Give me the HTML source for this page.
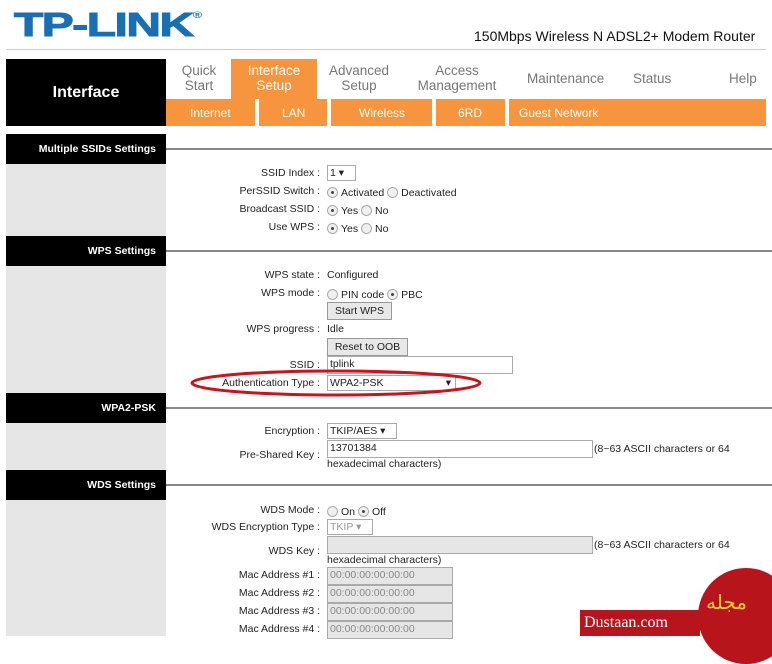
<!DOCTYPE html>
<html><head><meta charset="utf-8"><style>
*{margin:0;padding:0;box-sizing:border-box}
body{width:772px;height:636px;overflow:hidden;background:#fff;font-family:"Liberation Sans",Arial,sans-serif;font-size:10.5px;color:#222;position:relative}
.a{position:absolute}
.lbl{position:absolute;right:452px;text-align:right;white-space:nowrap;line-height:14px}
.v{position:absolute;left:327px;white-space:nowrap;line-height:14px}
.hdr{position:absolute;left:6px;width:160px;height:30px;background:#000;color:#fff;font-weight:bold;font-size:10.5px;text-align:right;padding-right:10px;line-height:30px}
.gray{position:absolute;left:6px;width:160px;background:#e6e6e6}
.hl{position:absolute;left:166px;right:0;height:2px;background:#888}
.nav{position:absolute;top:63px;color:#777;font-size:13.5px;text-align:center;line-height:15px}
.sub{position:absolute;top:106px;color:#fff;font-size:12px}
.sep{position:absolute;top:99px;width:4px;height:27px;background:#fff}
.rad{display:inline-block;width:11px;height:11px;border:1px solid #aaa;border-radius:50%;background:#f0f0f0;vertical-align:-2px;margin-right:3px;position:relative}
.rad.on::after{content:"";position:absolute;left:3px;top:3px;width:3px;height:3px;border-radius:50%;background:#444}
.inp{position:absolute;border:1px solid #aaa;background:#fff;font-size:10.5px;padding-left:2px;line-height:15px}
.btn{position:absolute;border:1px solid #999;background:#e8e8e8;font-size:10.5px;text-align:center;line-height:16px}
.dis{background:#e6e6e6;color:#888}
</style></head><body>
<div class="a" style="left:14px;top:6px;font-size:33px;font-weight:bold;color:#1a6fb3;letter-spacing:-1px;transform:scaleX(1.45);transform-origin:0 0;-webkit-text-stroke:1px #1a6fb3">TP-LINK<span style="font-size:9px;vertical-align:top;position:relative;top:4px;-webkit-text-stroke:0">®</span></div>
<div class="a" style="left:474px;top:28px;font-size:14px;color:#111">150Mbps Wireless N ADSL2+ Modem Router</div>
<div class="a" style="left:6px;top:49px;width:760px;height:1px;background:#ccc"></div>

<div class="a" style="left:6px;top:59px;width:160px;height:67px;background:#000;color:#fff;font-weight:bold;font-size:16px;text-align:center;line-height:67px">Interface</div>
<div class="a" style="left:231px;top:59px;width:86px;height:40px;background:#f7953f"></div>
<div class="a" style="left:166px;top:99px;width:600px;height:27px;background:#f7953f"></div>
<div class="nav" style="left:178px;width:42px">Quick<br>Start</div>
<div class="nav" style="left:231px;width:86px;color:#fff">Interface<br>Setup</div>
<div class="nav" style="left:322px;width:74px">Advanced<br>Setup</div>
<div class="nav" style="left:412px;width:90px">Access<br>Management</div>
<div class="nav" style="left:527px;top:71px">Maintenance</div>
<div class="nav" style="left:633px;top:71px">Status</div>
<div class="nav" style="left:729px;top:71px">Help</div>
<div class="sub" style="left:190px">Internet</div>
<div class="sep" style="left:255px"></div>
<div class="sub" style="left:282px">LAN</div>
<div class="sep" style="left:327px"></div>
<div class="sub" style="left:359px">Wireless</div>
<div class="sep" style="left:432px"></div>
<div class="sub" style="left:458px">6RD</div>
<div class="sep" style="left:505px"></div>
<div class="sub" style="left:519px">Guest Network</div>

<div class="hdr" style="top:134px">Multiple SSIDs Settings</div><div class="hl" style="top:148px"></div>
<div class="gray" style="top:164px;height:72px"></div>
<div class="hdr" style="top:236px">WPS Settings</div><div class="hl" style="top:250px"></div>
<div class="gray" style="top:266px;height:127px"></div>
<div class="hdr" style="top:393px">WPA2-PSK</div><div class="hl" style="top:407px"></div>
<div class="gray" style="top:423px;height:47px"></div>
<div class="hdr" style="top:470px">WDS Settings</div><div class="hl" style="top:484px"></div>
<div class="gray" style="top:500px;height:136px"></div>

<div class="lbl" style="top:166px">SSID Index :</div><div class="inp" style="left:327px;top:165px;width:29px;height:16px">1 ▾</div>
<div class="lbl" style="top:184px">PerSSID Switch :</div><div class="v" style="top:186px"><span class="rad on"></span>Activated <span class="rad"></span>Deactivated</div>
<div class="lbl" style="top:202px">Broadcast SSID :</div><div class="v" style="top:204px"><span class="rad on"></span>Yes <span class="rad"></span>No</div>
<div class="lbl" style="top:220px">Use WPS :</div><div class="v" style="top:222px"><span class="rad on"></span>Yes <span class="rad"></span>No</div>

<div class="lbl" style="top:268px">WPS state :</div><div class="v" style="top:268px">Configured</div>
<div class="lbl" style="top:286px">WPS mode :</div><div class="v" style="top:288px"><span class="rad"></span>PIN code <span class="rad on"></span>PBC</div>
<div class="btn" style="left:327px;top:302px;width:65px;height:18px">Start WPS</div>
<div class="lbl" style="top:322px">WPS progress :</div><div class="v" style="top:322px">Idle</div>
<div class="btn" style="left:327px;top:338px;width:81px;height:18px">Reset to OOB</div>
<div class="lbl" style="top:358px">SSID :</div><div class="inp" style="left:327px;top:356px;width:186px;height:18px">tplink</div>
<div class="lbl" style="top:376px">Authentication Type :</div><div class="inp" style="left:327px;top:375px;width:129px;height:16px">WPA2-PSK<span style="position:absolute;right:4px">▾</span></div>
<svg class="a" style="left:190px;top:368px" width="294" height="32"><ellipse cx="146" cy="15" rx="144" ry="12" fill="none" stroke="#d0101a" stroke-width="3"/></svg>

<div class="lbl" style="top:424px">Encryption :</div><div class="inp" style="left:327px;top:423px;width:70px;height:16px">TKIP/AES ▾</div>
<div class="lbl" style="top:448px">Pre-Shared Key :</div><div class="inp" style="left:327px;top:440px;width:266px;height:18px">13701384</div>
<div class="a" style="left:594px;top:443px">(8~63 ASCII characters or 64</div>
<div class="v" style="top:457px">hexadecimal characters)</div>

<div class="lbl" style="top:503px">WDS Mode :</div><div class="v" style="top:505px"><span class="rad"></span>On <span class="rad on"></span>Off</div>
<div class="lbl" style="top:520px">WDS Encryption Type :</div><div class="inp" style="left:327px;top:519px;width:46px;height:16px;color:#999">TKIP ▾</div>
<div class="lbl" style="top:544px">WDS Key :</div><div class="inp dis" style="left:327px;top:536px;width:266px;height:18px"></div>
<div class="a" style="left:594px;top:539px">(8~63 ASCII characters or 64</div>
<div class="v" style="top:553px">hexadecimal characters)</div>
<div class="lbl" style="top:568px">Mac Address #1 :</div><div class="inp dis" style="left:327px;top:567px;width:126px;height:18px">00:00:00:00:00:00</div>
<div class="lbl" style="top:586px">Mac Address #2 :</div><div class="inp dis" style="left:327px;top:585px;width:126px;height:18px">00:00:00:00:00:00</div>
<div class="lbl" style="top:604px">Mac Address #3 :</div><div class="inp dis" style="left:327px;top:603px;width:126px;height:18px">00:00:00:00:00:00</div>
<div class="lbl" style="top:622px">Mac Address #4 :</div><div class="inp dis" style="left:327px;top:621px;width:126px;height:18px">00:00:00:00:00:00</div>

<div class="a" style="left:698px;top:568px;width:96px;height:96px;border-radius:50%;background:#b8141c"></div>
<div class="a" style="left:580px;top:610px;width:120px;height:26px;background:#b8141c;color:#fff;font-family:'Liberation Serif',serif;font-size:16px;line-height:26px;padding-left:4px">Dustaan.com</div>
<div class="a" style="left:706px;top:590px;color:#f5d22a;font-size:20px;font-family:'DejaVu Sans',sans-serif">مجله</div>
</body></html>
